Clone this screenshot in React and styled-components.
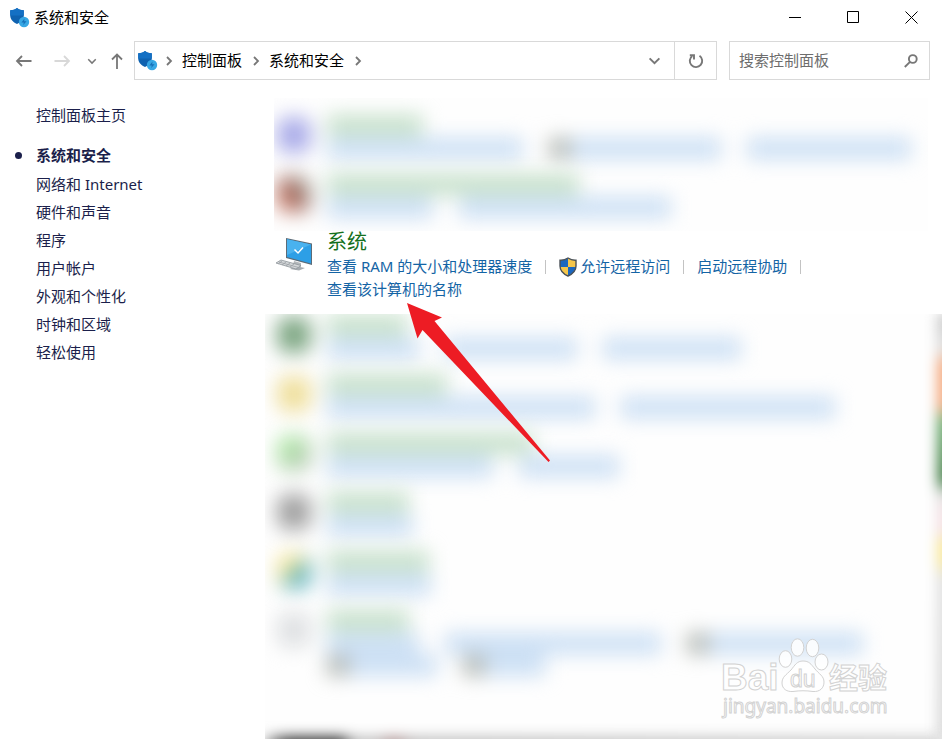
import React from 'react';
import styled, { createGlobalStyle } from 'styled-components';

const GlobalStyle = createGlobalStyle`
  * {
    box-sizing: border-box;
  }

  body {
    margin: 0;
    background: #ffffff;
    font-family: 'Noto Sans', 'Noto Sans CJK SC', sans-serif;
    font-size: 15px;
    color: #000000;
  }

  button, input {
    font: inherit;
  }
`;

const Page = styled.div`
  min-height: 100vh;
  display: flex;
  flex-direction: column;
  overflow: hidden;
`;

const TitleBar = styled.header`
  display: flex;
  align-items: center;
  height: 34px;
  padding: 0 2px 0 9px;
`;

const Title = styled.h1`
  flex: 1;
  margin: 0 0 0 4px;
  font-size: 15px;
  font-weight: 400;
  line-height: 24px;
`;

const IconButton = styled.button`
  display: flex;
  align-items: center;
  justify-content: center;
  flex: none;
  width: ${props => props.$width || '32px'};
  height: 34px;
  padding: 0;
  border: none;
  background: none;
  color: ${props => props.$color || '#777777'};
`;

const NavBar = styled.div`
  display: flex;
  align-items: center;
  gap: 6px;
  padding: 7px 12px 0 8px;
`;

const AddressBar = styled.nav`
  display: flex;
  align-items: center;
  flex: 1;
  height: 39px;
  padding-left: 2px;
  border: 1px solid #d9d9d9;
`;

const AddressIcon = styled.span`
  display: flex;
  width: 18px;
  overflow: visible;
`;

const CrumbArrow = styled.span`
  display: flex;
  justify-content: center;
  width: 27px;
  color: #777777;
`;

const Crumb = styled.a`
  padding-bottom: 2px;
  color: #000000;
  line-height: 24px;
  text-decoration: none;
  white-space: nowrap;
`;

const Spacer = styled.span`
  flex: 1;
`;

const RefreshCell = styled.div`
  display: flex;
  align-items: center;
  height: 100%;
  border-left: 1px solid #d9d9d9;
`;

const SearchBox = styled.div`
  display: flex;
  align-items: center;
  width: 201px;
  height: 39px;
  margin-left: 6px;
  padding: 0 2px 0 9px;
  border: 1px solid #d9d9d9;
`;

const SearchInput = styled.input`
  flex: 1;
  min-width: 0;
  padding: 0 0 2px;
  border: none;
  outline: none;
  background: none;

  &::placeholder {
    color: #6d6d6d;
    opacity: 1;
  }
`;

const Body = styled.div`
  display: flex;
  flex: 1;
  padding-top: 18px;
`;

const Sidebar = styled.aside`
  flex: none;
  width: 265px;
  padding: 3px 12px 0 36px;
`;

const SideLink = styled.a`
  display: block;
  position: relative;
  color: #1b1f4b;
  font-weight: ${props => (props.$active ? '700' : '400')};
  line-height: 28px;
  text-decoration: none;

  ${props => props.$active && `
    margin-bottom: 1px;

    &::before {
      content: '';
      position: absolute;
      top: 11px;
      left: -21px;
      width: 7px;
      height: 7px;
      border-radius: 50%;
      background: #1b1f4b;
    }
  `}
`;

const SideList = styled.ul`
  margin: 12px 0 0;
  padding: 0;
  list-style: none;
`;

const Content = styled.main`
  display: flex;
  flex-direction: column;
  flex: 1;
  min-width: 0;
`;

const HazePanel = styled.div`
  position: relative;
  overflow: hidden;
  background: #fefefe;
`;

const TopPanel = styled(HazePanel)`
  height: 133px;
  margin: 0 14px 0 9px;
  padding: 17px 0 0 3px;
`;

const BottomPanel = styled(HazePanel)`
  flex: 1;
  min-height: 425px;
  padding: 1px 0 0 12px;
`;

const HazeRow = styled.div`
  display: grid;
  grid-template-columns: 34px 1fr;
  column-gap: 16px;
  min-height: 59px;
  filter: blur(10px);
`;

const HazeIcon = styled.span`
  width: 34px;
  height: 36px;
  margin-top: 2px;
  border-radius: 12px;
  background: ${props => props.$fill};
`;

const HazeHeading = styled.div`
  width: ${props => props.$width}px;
  height: 21px;
  margin-bottom: 2px;
  background: #c6e0ca;
`;

const HazeLinks = styled.div`
  display: flex;
  gap: 26px;
  height: 21px;
  margin-bottom: 1px;
`;

const HazeLink = styled.span`
  width: ${props => props.$width}px;
  border-left: ${props => (props.$shield ? '22px solid #b4b9b4' : 'none')};
  background: #cbdff4;
`;

const RightEdge = styled.div`
  position: absolute;
  top: 0;
  right: -12px;
  bottom: 0;
  width: 16px;
  filter: blur(7px);
  background: linear-gradient(
    #bdbdbd 0, #dcdcdc 36px, #f3a070 50px, #f3a070 92px,
    #5fa562 106px, #2c6c30 166px, #dddddd 180px, #f3dce0 200px,
    #f3dce0 218px, #f7e590 228px, #f7e590 246px, #dddddd 264px, #d4d4d4 100%
  );
`;

const BottomEdge = styled.div`
  position: absolute;
  right: 0;
  bottom: -14px;
  left: 0;
  height: 16px;
  filter: blur(7px);
  background: linear-gradient(
    90deg, #bbbbbb 0, #222222 22px, #222222 76px, #bbbbbb 88px,
    #bbbbbb 112px, #a88888 128px, #bbbbbb 148px, #cccccc 100%
  );
`;

const SystemSection = styled.section`
  display: grid;
  grid-template-columns: 38px 1fr;
  column-gap: 13px;
  position: relative;
  min-height: 83px;
  padding: 0 14px 13px 11px;
`;

const SystemIcon = styled.div`
  padding-top: 5px;
`;

const SectionTitle = styled.h2`
  margin: 0 0 2px;
  color: #14701c;
  font-size: 20px;
  font-weight: 400;
  line-height: 22px;
`;

const TaskList = styled.div`
  display: flex;
  flex-wrap: wrap;
  align-items: center;
`;

const TaskLink = styled.a`
  display: flex;
  align-items: center;
  gap: 3px;
  color: #1464a5;
  line-height: 23px;
  text-decoration: none;
`;

const Divider = styled.span`
  width: 1px;
  height: 14px;
  margin: 0 13px;
  background: #c3c3c3;
`;

const ArrowMark = styled.svg`
  position: absolute;
  top: 72px;
  left: 142px;
  z-index: 2;
  pointer-events: none;
`;

const Watermark = styled.svg`
  position: absolute;
  right: 42px;
  bottom: 16px;
`;

const sideItems = [
  '系统和安全',
  '网络和 Internet',
  '硬件和声音',
  '程序',
  '用户帐户',
  '外观和个性化',
  '时钟和区域',
  '轻松使用',
];

const topRows = [
  { fill: '#a9abe8', heading: 96, lines: [[{ width: 196 }, { width: 172, shield: true }, { width: 164 }]] },
  { fill: 'linear-gradient(60deg, #cf7a64 20%, #96645c 55%, #b4c6b9 90%)', heading: 252, lines: [[{ width: 106 }, { width: 212 }]] },
];

const bottomRows = [
  { fill: '#7ba581', heading: 80, lines: [[{ width: 92 }, { width: 132 }, { width: 138 }]] },
  { fill: '#efdf9c', heading: 120, lines: [[{ width: 268 }, { width: 214 }]] },
  { fill: 'linear-gradient(135deg, #b0eba6 20%, #b5c9b3 80%)', heading: 206, lines: [[{ width: 166 }, { width: 100 }]] },
  { fill: '#a0a0a0', heading: 82, lines: [[{ width: 86 }]] },
  { fill: 'linear-gradient(135deg, #fbe89a 35%, #58b0c0 65%)', heading: 102, lines: [[{ width: 104 }]] },
  {
    fill: '#dfe1e3',
    heading: 82,
    lines: [
      [{ width: 92 }, { width: 216 }, { width: 176, shield: true }],
      [{ width: 110, shield: true }, { width: 82, shield: true }],
    ],
  },
];

const ShieldLogo = () => (
  <svg width="21" height="21" viewBox="0 0 21 21" style={{ flex: 'none' }} aria-hidden="true">
    <path d="M8 1C6 2.600 3.600 3.300 1.200 3.200V8.500C1.400 12.500 4 15 8 17C12 15 14.600 12.500 14.800 8.500V3.200C12.400 3.300 10 2.600 8 1Z" fill="#0f62b0" />
    <path d="M8 1C6 2.600 3.600 3.300 1.200 3.200V8.500H14.800V3.200C12.400 3.300 10 2.600 8 1Z" fill="#1470c4" />
    <circle cx="15" cy="15" r="5.200" fill="#37a7e4" />
    <path d="M15.500 11.600L12.400 15.400H14.800L14.200 18L17.600 14.300H15.200Z" fill="#1670b8" />
  </svg>
);

const UacShield = () => (
  <svg width="18" height="20" viewBox="0 0 18 20" aria-hidden="true">
    <path d="M9 1C6.500 2.700 4 3.400 1 3.200V9C1 14 4.500 17 9 19Z" fill="#1b67c0" />
    <path d="M9 1C11.500 2.700 14 3.400 17 3.200V9C17 14 13.500 17 9 19Z" fill="#f5c64b" />
    <path d="M1 10H9V19C4.800 17 1.500 14.500 1 10Z" fill="#f5c64b" />
    <path d="M17 10H9V19C13.200 17 16.500 14.500 17 10Z" fill="#1b67c0" />
    <path d="M9 1C6.500 2.700 4 3.400 1 3.200V9C1 14 4.500 17 9 19C13.500 17 17 14 17 9V3.200C14 3.400 11.500 2.700 9 1Z" fill="none" stroke="#4b5258" strokeWidth="1.400" />
  </svg>
);

const Chevron = ({ down, size = 12 }) => (
  <svg width={size} height={size} viewBox="0 0 12 12" fill="none" stroke="currentColor" strokeWidth="1.800" aria-hidden="true">
    <path d={down ? 'M1.500 4L6 8.500L10.500 4' : 'M4 2L8 6L4 10'} />
  </svg>
);

const ArrowIcon = ({ d }) => (
  <svg width="18" height="18" viewBox="0 0 18 18" fill="none" stroke="currentColor" strokeWidth="1.800" aria-hidden="true">
    <path d={d} />
  </svg>
);

const HazeCategory = ({ row }) => (
  <HazeRow>
    <HazeIcon $fill={row.fill} />
    <div>
      <HazeHeading $width={row.heading} />
      {row.lines.map((line, i) => (
        <HazeLinks key={i}>
          {line.map((link, j) => (
            <HazeLink key={j} $width={link.width} $shield={link.shield} />
          ))}
        </HazeLinks>
      ))}
    </div>
  </HazeRow>
);

const App = () => {
  return (
    <Page>
      <GlobalStyle />
      <TitleBar>
        <ShieldLogo />
        <Title>系统和安全</Title>
        <IconButton $width="58px" $color="#000000" aria-label="最小化">
          <svg width="13" height="13" viewBox="0 0 13 13" stroke="currentColor"><path d="M0 6.500H12" /></svg>
        </IconButton>
        <IconButton $width="58px" $color="#000000" aria-label="最大化">
          <svg width="13" height="13" viewBox="0 0 13 13" stroke="currentColor" fill="none"><path d="M.5.500H11.500V11.500H.5Z" /></svg>
        </IconButton>
        <IconButton $width="58px" $color="#000000" aria-label="关闭">
          <svg width="13" height="13" viewBox="0 0 13 13" stroke="currentColor"><path d="M.5.500L12.500 12.500M12.500.500L.5 12.500" /></svg>
        </IconButton>
      </TitleBar>

      <NavBar>
        <IconButton aria-label="后退"><ArrowIcon d="M16.500 9H2M7 4L2 9L7 14" /></IconButton>
        <IconButton $color="#d8d8d8" aria-label="前进"><ArrowIcon d="M1.500 9H16M11 4L16 9L11 14" /></IconButton>
        <IconButton $width="16px" aria-label="最近浏览的位置"><Chevron down size={10} /></IconButton>
        <IconButton $width="22px" aria-label="向上"><ArrowIcon d="M9 17V2.500M4 7.500L9 2.500L14 7.500" /></IconButton>
        <AddressBar>
          <AddressIcon><ShieldLogo /></AddressIcon>
          <CrumbArrow><Chevron /></CrumbArrow>
          <Crumb href="#">控制面板</Crumb>
          <CrumbArrow><Chevron /></CrumbArrow>
          <Crumb href="#">系统和安全</Crumb>
          <CrumbArrow><Chevron /></CrumbArrow>
          <Spacer />
          <IconButton $width="40px" aria-label="以前的位置"><Chevron down size={13} /></IconButton>
          <RefreshCell>
            <IconButton $width="41px" aria-label="刷新">
              <svg width="16" height="16" viewBox="0 0 16 16" fill="none" stroke="currentColor" strokeWidth="1.900">
                <path d="M11.500 2.800A6.200 6.200 0 1 1 4.200 3" />
                <path d="M1.800 2.200H6V6.600" />
              </svg>
            </IconButton>
          </RefreshCell>
        </AddressBar>
        <SearchBox>
          <SearchInput type="text" placeholder="搜索控制面板" aria-label="搜索控制面板" />
          <IconButton aria-label="搜索">
            <svg width="14" height="14" viewBox="0 0 14 14" fill="none" stroke="currentColor" strokeWidth="1.900">
              <circle cx="8.800" cy="5" r="3.900" />
              <path d="M6 7.900L.8 13" />
            </svg>
          </IconButton>
        </SearchBox>
      </NavBar>

      <Body>
        <Sidebar>
          <SideLink href="#">控制面板主页</SideLink>
          <SideList>
            {sideItems.map((item, i) => (
              <li key={item}>
                <SideLink href="#" $active={i === 0}>{item}</SideLink>
              </li>
            ))}
          </SideList>
        </Sidebar>

        <Content>
          <TopPanel>
            {topRows.map((row, i) => <HazeCategory key={i} row={row} />)}
          </TopPanel>

          <SystemSection>
            <SystemIcon>
              <svg width="38" height="38" viewBox="0 0 38 38" aria-hidden="true">
                <path d="M18 25L25 27V31L17 29Z" fill="#b4b8bb" />
                <path d="M14 33L19 30L29 32L23 34.500Z" fill="#a6abb0" />
                <path d="M10 2L36 7.500V29L10 22Z" fill="#5c6b77" />
                <path d="M11 3.300L35 8.500V27.500L11 21Z" fill="#2d9fe6" />
                <path d="M11 3.300L35 8.500L11 19Z" fill="#49b2ef" />
                <path d="M18.500 13.500L22 17L27 11.500" fill="none" stroke="#ffffff" strokeWidth="1.500" />
                <path d="M0 27L5 24L25 29.500L20 33Z" fill="#d5d8da" stroke="#8d9499" strokeWidth=".8" />
                <path d="M3 26L22.500 31.500M2 28L6 25M6 29L10 26M10 30L14 27M14 31L18 28" stroke="#9aa0a5" strokeWidth=".8" />
              </svg>
            </SystemIcon>
            <div>
              <SectionTitle>系统</SectionTitle>
              <TaskList>
                <TaskLink href="#">查看 RAM 的大小和处理器速度</TaskLink>
                <Divider />
                <TaskLink href="#"><UacShield />允许远程访问</TaskLink>
                <Divider />
                <TaskLink href="#">启动远程协助</TaskLink>
                <Divider />
                <TaskLink href="#">查看该计算机的名称</TaskLink>
              </TaskList>
            </div>
            <ArrowMark width="144" height="160" viewBox="0 0 144 160" aria-hidden="true">
              <path d="M0 0L35 14.500L27.500 18L143 157.500L141.500 159L15.500 27L10.500 35.500Z" fill="#ed1c24" />
            </ArrowMark>
          </SystemSection>

          <BottomPanel>
            {bottomRows.map((row, i) => <HazeCategory key={i} row={row} />)}
            <RightEdge />
            <BottomEdge />
            <Watermark
              width="180"
              height="86"
              viewBox="0 0 180 86"
              fill="#ffffff"
              fillOpacity=".85"
              stroke="#d2d2d2"
              strokeWidth="1"
              fontFamily="'Liberation Sans', sans-serif"
            >
              <text x="1" y="53" fontSize="37" fontWeight="700">Bai</text>
              <ellipse cx="65.500" cy="22" rx="6.300" ry="8.300" />
              <ellipse cx="77.500" cy="10.500" rx="6.300" ry="8.700" />
              <ellipse cx="92.500" cy="11" rx="6.300" ry="8.700" />
              <ellipse cx="101.500" cy="25" rx="6.500" ry="8" />
              <path d="M83 24C77 24 75 28 71 33C66 38 62 40 62 46C62 52 67 55 73 54.500C80 53.500 86 53.500 93 54.500C100 55 104 51 104 45C104 39 99 37 95 32C91 27 89 24 83 24Z" />
              <text x="70" y="50" fontSize="23">du</text>
              <text x="109" y="52" fontSize="29" fontWeight="700" fontFamily="'Noto Sans CJK SC', sans-serif">经验</text>
              <text x="3" y="76" fontSize="19" fontFamily="'Noto Sans', sans-serif">jingyan.baidu.com</text>
            </Watermark>
          </BottomPanel>
        </Content>
      </Body>
    </Page>
  );
};

export default App;
